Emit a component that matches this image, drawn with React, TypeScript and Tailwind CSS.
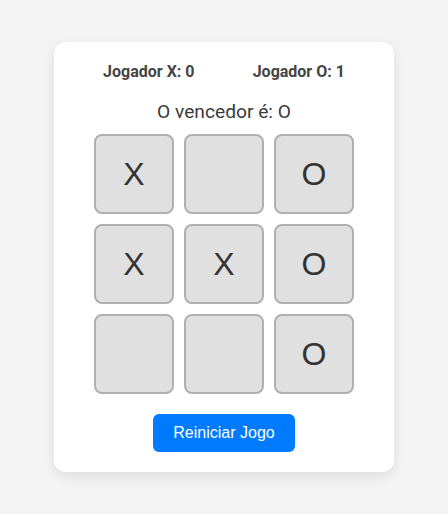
import React from "react";

const board = ["X", "", "O", "X", "X", "O", "", "", "O"];

export default function App() {
  return (
    <div className="min-h-[514px] w-full bg-[#f4f4f4] flex justify-center pt-[42px]" style={{ fontFamily: "Roboto, 'Liberation Sans', sans-serif" }}>
      <div className="w-[340px] h-[430px] bg-white rounded-xl shadow-[0_4px_14px_rgba(0,0,0,0.1)] p-5 flex flex-col items-center text-[#333]">
        <div className="w-full flex justify-around h-5 items-center text-[16px] font-bold leading-5 text-[#444]">
          <span>Jogador X: 0</span>
          <span>Jogador O: 1</span>
        </div>
        <div className="mt-[18px] h-6 text-[19.2px] leading-6 text-[#3a3a3a]">O vencedor é: O</div>
        <div className="mt-[10px] grid grid-cols-[80px_80px_80px] gap-[10px]">
          {board.map((c, i) => (
            <button
              key={i}
              className="w-20 h-20 bg-[#e0e0e0] border-2 border-[#b0b0b0] rounded-lg flex items-center justify-center text-[32px] text-[#333]"
              style={{ fontFamily: "'Liberation Sans', Arial, sans-serif" }}
            >
              {c}
            </button>
          ))}
        </div>
        <button
          className="mt-5 w-[142px] h-[38px] bg-[#007bff] text-white rounded-md text-[16px]"
          style={{ fontFamily: "'Liberation Sans', Arial, sans-serif" }}
        >
          Reiniciar Jogo
        </button>
      </div>
    </div>
  );
}
